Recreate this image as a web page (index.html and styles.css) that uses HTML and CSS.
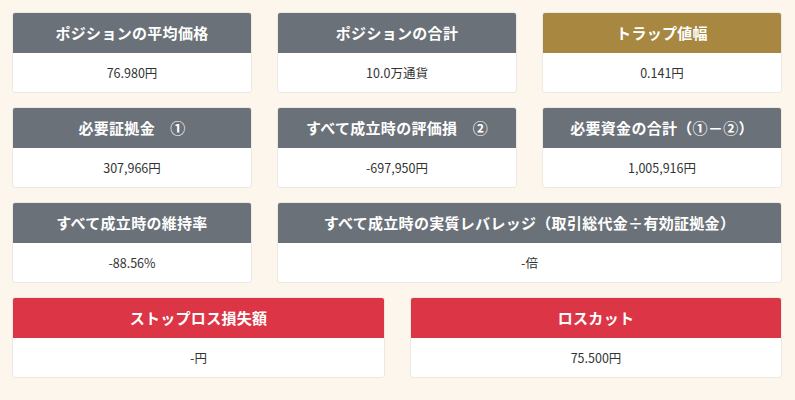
FILE: index.html
```html
<!DOCTYPE html>
<html lang="ja">
<head>
<meta charset="utf-8">
<link rel="stylesheet" href="styles.css">
</head>
<body>
<div class="page">
  <div class="grid grid-3">
    <div class="card"><div class="card-head">ポジションの平均価格</div><div class="card-body">76.980円</div></div>
    <div class="card"><div class="card-head">ポジションの合計</div><div class="card-body">10.0万通貨</div></div>
    <div class="card"><div class="card-head head-gold">トラップ値幅</div><div class="card-body">0.141円</div></div>
    <div class="card"><div class="card-head">必要証拠金　①</div><div class="card-body">307,966円</div></div>
    <div class="card"><div class="card-head">すべて成立時の評価損　②</div><div class="card-body">-697,950円</div></div>
    <div class="card"><div class="card-head">必要資金の合計（①－②）</div><div class="card-body">1,005,916円</div></div>
    <div class="card"><div class="card-head">すべて成立時の維持率</div><div class="card-body">-88.56%</div></div>
    <div class="card span-2"><div class="card-head">すべて成立時の実質レバレッジ（取引総代金÷有効証拠金）</div><div class="card-body">-倍</div></div>
  </div>
  <div class="grid grid-2">
    <div class="card"><div class="card-head head-red">ストップロス損失額</div><div class="card-body">-円</div></div>
    <div class="card"><div class="card-head head-red">ロスカット</div><div class="card-body">75.500円</div></div>
  </div>
</div>
</body>
</html>
```
FILE: styles.css
```css
html, body {
  margin: 0;
  padding: 0;
  background: #fdf6ec;
}
body {
  font-family: "Noto Sans CJK JP", "Noto Sans", sans-serif;
  color: #333;
}
.page {
  width: 770px;
  padding: 12px 13px 0 12px;
  display: flex;
  flex-direction: column;
  gap: 14px;
}
.grid {
  display: grid;
  column-gap: 25px;
  row-gap: 14px;
}
.grid-3 {
  grid-template-columns: 240px 240px 240px;
}
.grid-2 {
  grid-template-columns: 373px 372px;
}
.span-2 {
  grid-column: span 2;
}
.card {
  background: #fff;
  border: 1px solid #ece8e2;
  border-radius: 3px;
  overflow: hidden;
  height: 79px;
  display: flex;
  flex-direction: column;
}
.card-head {
  height: 41px;
  flex: none;
  background: #6b7179;
  color: #fff;
  font-weight: 700;
  font-size: 15px;
  display: flex;
  align-items: center;
  justify-content: center;
  letter-spacing: 0.3px;
  margin: -1px -1px 0 -1px;
}
.head-gold {
  background: #a88841;
}
.head-red {
  background: #dc3545;
}
.card-body {
  flex: 1;
  display: flex;
  align-items: center;
  justify-content: center;
  font-size: 12.5px;
  color: #333;
}
```
